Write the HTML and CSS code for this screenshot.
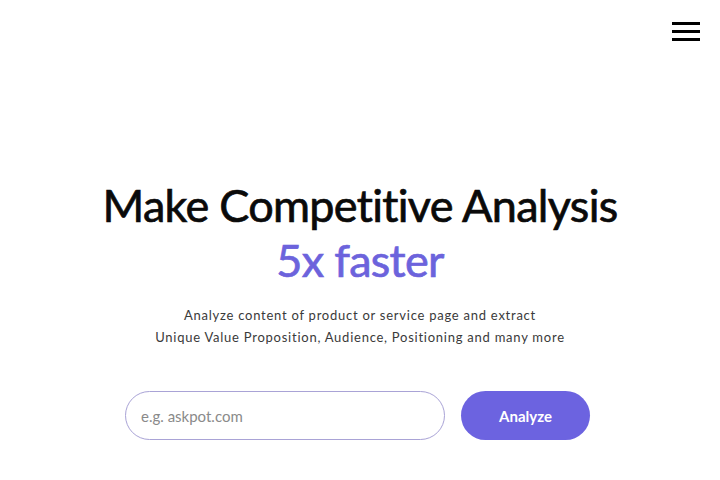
FILE: index.html
```html
<!DOCTYPE html>
<html>
<head>
<meta charset="utf-8">
<link rel="stylesheet" href="styles.css">
</head>
<body>
<header class="topbar">
  <button class="menu" aria-label="Menu">
    <span></span><span></span><span></span>
  </button>
</header>
<main class="hero">
  <h1 class="title">Make Competitive Analysis<br><span class="accent">5x faster</span></h1>
  <p class="sub">Analyze content of product or service page and extract<br>Unique Value Proposition, Audience, Positioning and many more</p>
  <form class="search">
    <input class="field" type="text" placeholder="e.g. askpot.com">
    <button class="go" type="button">Analyze</button>
  </form>
</main>
</body>
</html>
```
FILE: styles.css
```css
* { box-sizing: border-box; }
html, body { margin: 0; padding: 0; background: #fff; }
body {
  font-family: Lato, "Open Sans", sans-serif;
  width: 720px;
  height: 480px;
  overflow: hidden;
}
.topbar {
  display: flex;
  justify-content: flex-end;
  padding: 22px 20px 0 0;
  height: 60px;
}
.menu {
  display: flex;
  flex-direction: column;
  gap: 5px;
  width: 28px;
  padding: 0;
  border: 0;
  background: none;
}
.menu span {
  display: block;
  height: 3px;
  width: 28px;
  background: #000;
}
.hero {
  display: flex;
  flex-direction: column;
  align-items: center;
  padding-top: 118px;
}
.title {
  margin: 0;
  font-size: 45px;
  font-weight: 400;
  line-height: 55px;
  text-align: center;
  color: #0a0a0a;
  letter-spacing: -0.7px;
  -webkit-text-stroke: 0.7px currentColor;
}
.accent { color: #6c63dc; }
.sub {
  margin: 16px 0 0;
  font-size: 13px;
  line-height: 22px;
  letter-spacing: 0.75px;
  color: #3a3a3a;
  text-align: center;
}
.search {
  display: flex;
  gap: 16px;
  margin-top: 43px;
  margin-right: 5px;
}
.field {
  width: 320px;
  height: 49px;
  border: 1px solid #a9a3d6;
  border-radius: 25px;
  padding: 0 15px;
  font-family: inherit;
  font-size: 15px;
  color: #333;
  outline: none;
}
.field::placeholder { color: #8a8a8a; }
.go {
  width: 129px;
  height: 49px;
  border: 0;
  border-radius: 25px;
  background: #6c63e0;
  color: #fff;
  font-family: inherit;
  font-size: 15px;
  font-weight: 700;
}
```
